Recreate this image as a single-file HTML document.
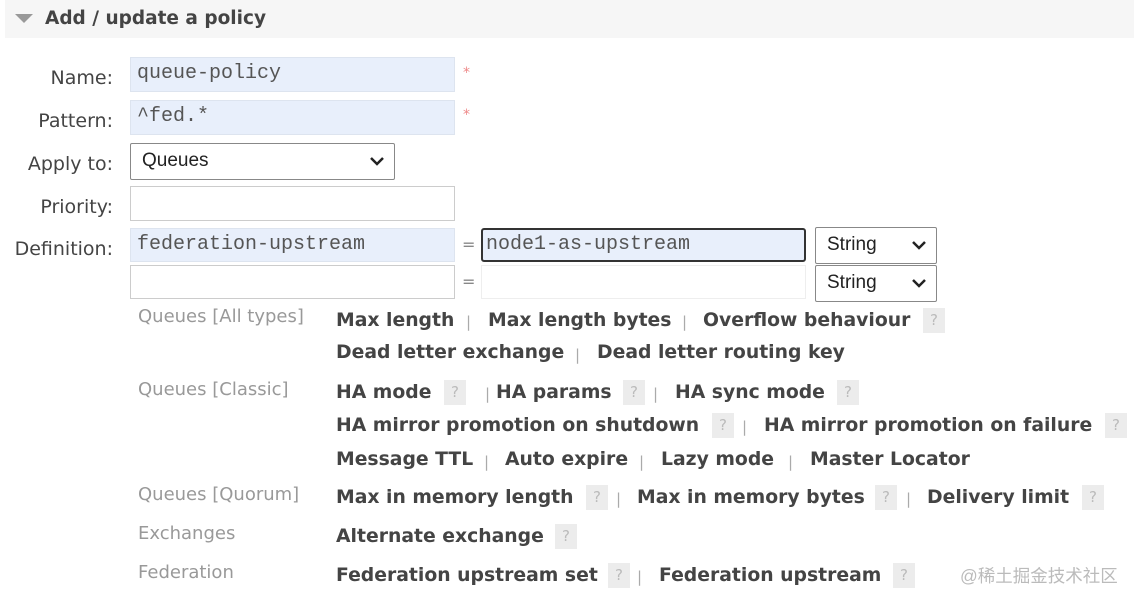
<!DOCTYPE html>
<html><head><meta charset="utf-8"><style>
body{margin:0;width:1139px;height:604px;background:#fff;position:relative;overflow:hidden;font-family:"DejaVu Sans","Liberation Sans",sans-serif;}
.a{position:absolute;white-space:nowrap;line-height:22px;height:22px;}
.b{font-weight:bold;font-size:18.8px;color:#444;}
.s{color:#aaa;font-size:15px;}
.q{position:absolute;width:22px;height:25px;background:#ececec;color:#bbb;font-size:15px;text-align:center;line-height:25px;}
.lab{position:absolute;right:1026px;font-size:19px;color:#444;line-height:22px;white-space:nowrap;}
.g{color:#999;font-size:18px;}
.in{position:absolute;box-sizing:border-box;border:1px solid #ccc;font-family:"Liberation Mono",monospace;font-size:20px;color:#555;padding-left:6px;line-height:32px;}
.bl{background:#e8effb;border-color:#dde4ef;}
.sel{position:absolute;box-sizing:border-box;border:1px solid #888;border-radius:2px;background:#fff;font-family:"Liberation Sans",sans-serif;font-size:19px;color:#222;padding-left:11px;line-height:34px;}
.sel svg{position:absolute;right:10px;top:13px;}
</style></head><body>
<div style="position:absolute;left:5px;top:0;width:1129px;height:38px;background:#f6f6f6"></div>
<svg style="position:absolute;left:15px;top:14px" width="18" height="10"><path d="M0 0H18L9 9Z" fill="#999"/></svg>
<div class="a" style="left:45px;top:8px;font-weight:bold;font-size:18.5px;color:#444">Add / update a policy</div>

<div class="lab" style="top:67px">Name:</div>
<div class="lab" style="top:110px">Pattern:</div>
<div class="lab" style="top:153px">Apply to:</div>
<div class="lab" style="top:196px">Priority:</div>
<div class="lab" style="top:238px">Definition:</div>

<div class="in bl" style="left:130px;top:57px;width:325px;height:35px">queue-policy</div>
<div class="in bl" style="left:130px;top:100px;width:325px;height:35px">^fed.*</div>
<div class="a" style="left:463px;top:62px;color:#e88;font-size:14px">*</div>
<div class="a" style="left:463px;top:104px;color:#e88;font-size:14px">*</div>
<div class="sel" style="left:130px;top:143px;width:265px;height:37px">Queues<svg width="14" height="9"><path d="M1 1L7 7L13 1" stroke="#222" stroke-width="2.5" fill="none"/></svg></div>
<div class="in" style="left:130px;top:186px;width:325px;height:35px"></div>
<div class="in bl" style="left:130px;top:228px;width:325px;height:34px">federation-upstream</div>
<div class="in" style="left:130px;top:265px;width:325px;height:34px"></div>
<div class="a" style="left:462px;top:234px;color:#888;font-size:16px">=</div>
<div class="a" style="left:462px;top:271px;color:#888;font-size:16px">=</div>
<div class="in bl" style="left:481px;top:228px;width:325px;height:34px;border:2px solid #333;border-radius:3px;padding-left:3px;line-height:30px">node1-as-upstream</div>
<div class="in" style="left:481px;top:265px;width:325px;height:34px;border-color:#eee"></div>
<div class="sel" style="left:815px;top:227px;width:122px;height:37px">String<svg width="14" height="9"><path d="M1 1L7 7L13 1" stroke="#222" stroke-width="2.5" fill="none"/></svg></div>
<div class="sel" style="left:815px;top:265px;width:122px;height:37px">String<svg width="14" height="9"><path d="M1 1L7 7L13 1" stroke="#222" stroke-width="2.5" fill="none"/></svg></div>

<div class="a g" style="left:138px;top:306px">Queues [All types]</div>
<div class="a g" style="left:138px;top:379px">Queues [Classic]</div>
<div class="a g" style="left:138px;top:484px">Queues [Quorum]</div>
<div class="a g" style="left:138px;top:523px">Exchanges</div>
<div class="a g" style="left:138px;top:562px">Federation</div>

<div class="a b" style="left:336px;top:310px">Max length</div><div class="a s" style="left:466px;top:311px">|</div>
<div class="a b" style="left:488px;top:310px">Max length bytes</div><div class="a s" style="left:682px;top:311px">|</div>
<div class="a b" style="left:703px;top:310px">Overflow behaviour</div><div class="q" style="left:923px;top:308px">?</div>

<div class="a b" style="left:336px;top:342px">Dead letter exchange</div><div class="a s" style="left:575px;top:344px">|</div>
<div class="a b" style="left:597px;top:342px">Dead letter routing key</div>

<div class="a b" style="left:336px;top:382px">HA mode</div><div class="q" style="left:444px;top:380px">?</div><div class="a s" style="left:485px;top:383px">|</div>
<div class="a b" style="left:496px;top:382px">HA params</div><div class="q" style="left:623px;top:380px">?</div><div class="a s" style="left:653px;top:383px">|</div>
<div class="a b" style="left:675px;top:382px">HA sync mode</div><div class="q" style="left:837px;top:380px">?</div>

<div class="a b" style="left:336px;top:415px">HA mirror promotion on shutdown</div><div class="q" style="left:712px;top:413px">?</div><div class="a s" style="left:742px;top:416px">|</div>
<div class="a b" style="left:764px;top:415px">HA mirror promotion on failure</div><div class="q" style="left:1105px;top:413px">?</div>

<div class="a b" style="left:336px;top:449px">Message TTL</div><div class="a s" style="left:484px;top:451px">|</div>
<div class="a b" style="left:505px;top:449px">Auto expire</div><div class="a s" style="left:639px;top:451px">|</div>
<div class="a b" style="left:661px;top:449px">Lazy mode</div><div class="a s" style="left:788px;top:451px">|</div>
<div class="a b" style="left:810px;top:449px">Master Locator</div>

<div class="a b" style="left:336px;top:487px">Max in memory length</div><div class="q" style="left:586px;top:485px">?</div><div class="a s" style="left:616px;top:488px">|</div>
<div class="a b" style="left:637px;top:487px">Max in memory bytes</div><div class="q" style="left:875px;top:485px">?</div><div class="a s" style="left:906px;top:488px">|</div>
<div class="a b" style="left:927px;top:487px">Delivery limit</div><div class="q" style="left:1082px;top:485px">?</div>

<div class="a b" style="left:336px;top:526px">Alternate exchange</div><div class="q" style="left:555px;top:524px">?</div>

<div class="a b" style="left:336px;top:565px">Federation upstream set</div><div class="q" style="left:608px;top:563px">?</div><div class="a s" style="left:637px;top:566px">|</div>
<div class="a b" style="left:659px;top:565px">Federation upstream</div><div class="q" style="left:893px;top:563px">?</div>

<div class="a" style="left:960px;top:565px;color:#bbb;font-size:17.5px;font-family:'Liberation Sans','Noto Sans CJK SC',sans-serif">@稀土掘金技术社区</div>
</body></html>
